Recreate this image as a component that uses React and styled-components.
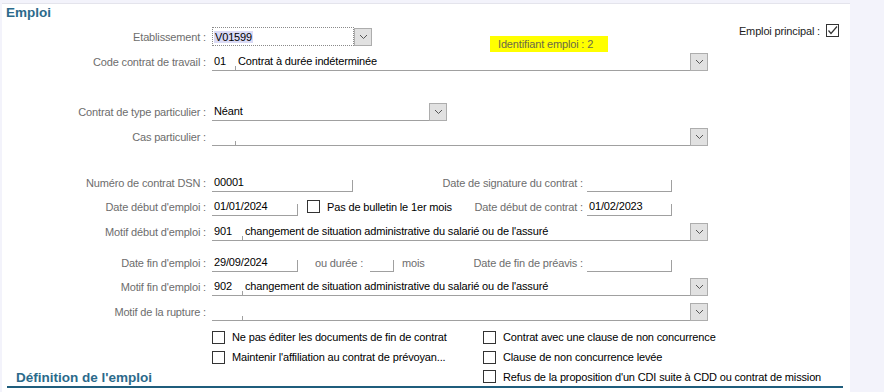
import React from "react";
import styled, { createGlobalStyle } from "styled-components";

const GlobalStyle = createGlobalStyle`
  body {
    margin: 0;
    background: #f3f3fb;
    font-family: "Liberation Sans", Arial, sans-serif;
    font-size: 11px;
    letter-spacing: -0.15px;
  }
`;

const Chevron = () => (
  <svg width="9" height="6" viewBox="0 0 9 6">
    <path d="M1 1 L4.5 4.5 L8 1" fill="none" stroke="#555" strokeWidth="1" />
  </svg>
);

const Tick = () => (
  <svg width="11" height="11" viewBox="0 0 11 11">
    <path d="M1.5 5.5 L4 8.5 L10 1.5" fill="none" stroke="#333" strokeWidth="1.2" />
  </svg>
);

const Check = ({ checked, children, ...rest }) => (
  <CheckWrap {...rest}>
    <Box>{checked && <Tick />}</Box>
    {children && <CheckText>{children}</CheckText>}
  </CheckWrap>
);

const Combo = ({ w, code, codeW, text }) => (
  <>
    <ComboField $w={w}>
      {codeW ? <CodePart $w={codeW}>{code}</CodePart> : null}
      <Value>{text}</Value>
    </ComboField>
    <DropButton>
      <Chevron />
    </DropButton>
  </>
);

const App = () => {
  return (
    <>
      <GlobalStyle />
      <Panel>
        <Title>Emploi</Title>

        <Row $mt={5}>
          <Label>Etablissement :</Label>
          <DottedBox>
            <Selected>V01599</Selected>
          </DottedBox>
          <DropButton>
            <Chevron />
          </DropButton>
          <IdBadge>Identifiant emploi : 2</IdBadge>
          <MainJob>
            Emploi principal :
            <Check checked />
          </MainJob>
        </Row>

        <Row $mt={6}>
          <Label>Code contrat de travail :</Label>
          <Combo w={478} code="01" codeW={24} text="Contrat à durée indéterminée" />
        </Row>

        <Row $mt={31}>
          <Label>Contrat de type particulier :</Label>
          <Combo w={217} text="Néant" />
        </Row>

        <Row $mt={6}>
          <Label>Cas particulier :</Label>
          <Combo w={478} code="" codeW={24} text="" />
        </Row>

        <Row $mt={27}>
          <Label>Numéro de contrat DSN :</Label>
          <Cell>
            <TextField $w={141}>00001</TextField>
            <RightLabel>Date de signature du contrat :</RightLabel>
          </Cell>
          <TextField $w={85} />
        </Row>

        <Row $mt={5}>
          <Label>Date début d'emploi :</Label>
          <Cell>
            <TextField $w={86}>01/01/2024</TextField>
            <Check style={{ marginLeft: 9 }}>Pas de bulletin le 1er mois</Check>
            <RightLabel>Date début de contrat :</RightLabel>
          </Cell>
          <TextField $w={85}>01/02/2023</TextField>
        </Row>

        <Row $mt={6}>
          <Label>Motif début d'emploi :</Label>
          <Combo
            w={478}
            code="901"
            codeW={31}
            text="changement de situation administrative du salarié ou de l'assuré"
          />
        </Row>

        <Row $mt={12}>
          <Label>Date fin d'emploi :</Label>
          <Cell>
            <TextField $w={86}>29/09/2024</TextField>
            <Muted $ml={17}>ou durée :</Muted>
            <TextField $w={24} $ml={7} />
            <Muted $ml={8}>mois</Muted>
            <RightLabel>Date de fin de préavis :</RightLabel>
          </Cell>
          <TextField $w={85} />
        </Row>

        <Row $mt={5}>
          <Label>Motif fin d'emploi :</Label>
          <Combo
            w={478}
            code="902"
            codeW={31}
            text="changement de situation administrative du salarié ou de l'assuré"
          />
        </Row>

        <Row $mt={6}>
          <Label>Motif de la rupture :</Label>
          <Combo w={478} code="" codeW={31} text="" />
        </Row>

        <CheckGrid>
          <Check>Ne pas éditer les documents de fin de contrat</Check>
          <Check>Contrat avec une clause de non concurrence</Check>
          <Check>Maintenir l'affiliation au contrat de prévoyan...</Check>
          <Check>Clause de non concurrence levée</Check>
        </CheckGrid>

        <SectionBand>
          <SectionTitle>Définition de l'emploi</SectionTitle>
          <Check>Refus de la proposition d'un CDI suite à CDD ou contrat de mission</Check>
        </SectionBand>
      </Panel>
    </>
  );
};

const Panel = styled.div`
  margin: 3px 0 0 2px;
  width: 848px;
  height: 389px;
  background: #fff;
  border-top: 1px solid #e4e4ec;
  box-sizing: border-box;
  overflow: hidden;
`;

const Title = styled.div`
  height: 18px;
  line-height: 18px;
  padding-left: 4px;
  font-size: 13.5px;
  font-weight: bold;
  letter-spacing: 0;
  color: #2b6a8b;
`;

const Row = styled.div`
  display: flex;
  align-items: center;
  height: 19px;
  margin-top: ${(p) => p.$mt}px;
  white-space: nowrap;
`;

const Label = styled.div`
  width: 204px;
  margin-right: 6px;
  flex-shrink: 0;
  text-align: right;
  color: #6d6d6d;
`;

const Muted = styled.span`
  color: #6d6d6d;
  margin-left: ${(p) => p.$ml || 0}px;
`;

const Value = styled.span`
  color: #000;
  padding-left: 2px;
`;

const DottedBox = styled.div`
  width: 142px;
  height: 19px;
  box-sizing: border-box;
  border: 1px dotted #8a8a8a;
  display: flex;
  align-items: center;
  padding-left: 1px;
`;

const Selected = styled.span`
  background: #dadaf5;
  color: #000;
  padding: 0 1px;
`;

const DropButton = styled.div`
  width: 18px;
  height: 18px;
  box-sizing: border-box;
  align-self: flex-end;
  background: #e1e1e1;
  border: 1px solid #adadad;
  display: flex;
  align-items: center;
  justify-content: center;
  flex-shrink: 0;
`;

const IdBadge = styled.div`
  align-self: flex-start;
  margin: 9px 0 0 118px;
  width: 118px;
  height: 16px;
  box-sizing: border-box;
  padding-left: 8px;
  line-height: 17px;
  background: #ffff00;
  color: #6a6a4a;
`;

const MainJob = styled.div`
  align-self: flex-start;
  margin: -3px 11px 0 auto;
  display: flex;
  align-items: center;
  gap: 6px;
  color: #1c1c1c;
`;

const ComboField = styled.div`
  width: ${(p) => p.$w}px;
  height: 19px;
  box-sizing: border-box;
  border-bottom: 1px solid #a0a0a0;
  display: flex;
  align-items: center;
`;

const CodePart = styled.div`
  position: relative;
  width: ${(p) => p.$w}px;
  height: 100%;
  display: flex;
  align-items: center;
  padding-left: 2px;
  box-sizing: border-box;
  color: #000;
  &::after {
    content: "";
    position: absolute;
    right: 0;
    bottom: 0;
    width: 1px;
    height: 4px;
    background: #a0a0a0;
  }
`;

const TextField = styled.div`
  position: relative;
  width: ${(p) => p.$w}px;
  height: 19px;
  margin-left: ${(p) => p.$ml || 0}px;
  box-sizing: border-box;
  border-bottom: 1px solid #a0a0a0;
  display: flex;
  align-items: center;
  padding-left: 2px;
  color: #000;
  flex-shrink: 0;
  &::after {
    content: "";
    position: absolute;
    right: 0;
    bottom: 0;
    width: 1px;
    height: 11px;
    background: #a0a0a0;
  }
`;

const Cell = styled.div`
  width: 371px;
  display: flex;
  align-items: center;
  margin-right: 4px;
`;

const RightLabel = styled.span`
  margin-left: auto;
  color: #6d6d6d;
`;

const CheckWrap = styled.div`
  display: flex;
  align-items: center;
`;

const Box = styled.div`
  width: 13px;
  height: 13px;
  box-sizing: border-box;
  border: 1px solid #333;
  background: #fff;
  display: flex;
  align-items: center;
  justify-content: center;
  flex-shrink: 0;
`;

const CheckText = styled.span`
  margin-left: 7px;
  color: #000;
  white-space: nowrap;
`;

const CheckGrid = styled.div`
  margin: 6px 0 0 210px;
  display: grid;
  grid-template-columns: 271px auto;
  grid-auto-rows: 20px;
  align-items: center;
`;

const SectionBand = styled.div`
  margin: 0 7px 0 5px;
  height: 19px;
  border-bottom: 2px solid #1f5d7c;
  display: flex;
  align-items: center;
`;

const SectionTitle = styled.div`
  width: 476px;
  box-sizing: border-box;
  padding-left: 9px;
  align-self: flex-end;
  font-size: 13.5px;
  font-weight: bold;
  letter-spacing: 0;
  color: #2b6a8b;
  line-height: 16px;
`;

export default App;
